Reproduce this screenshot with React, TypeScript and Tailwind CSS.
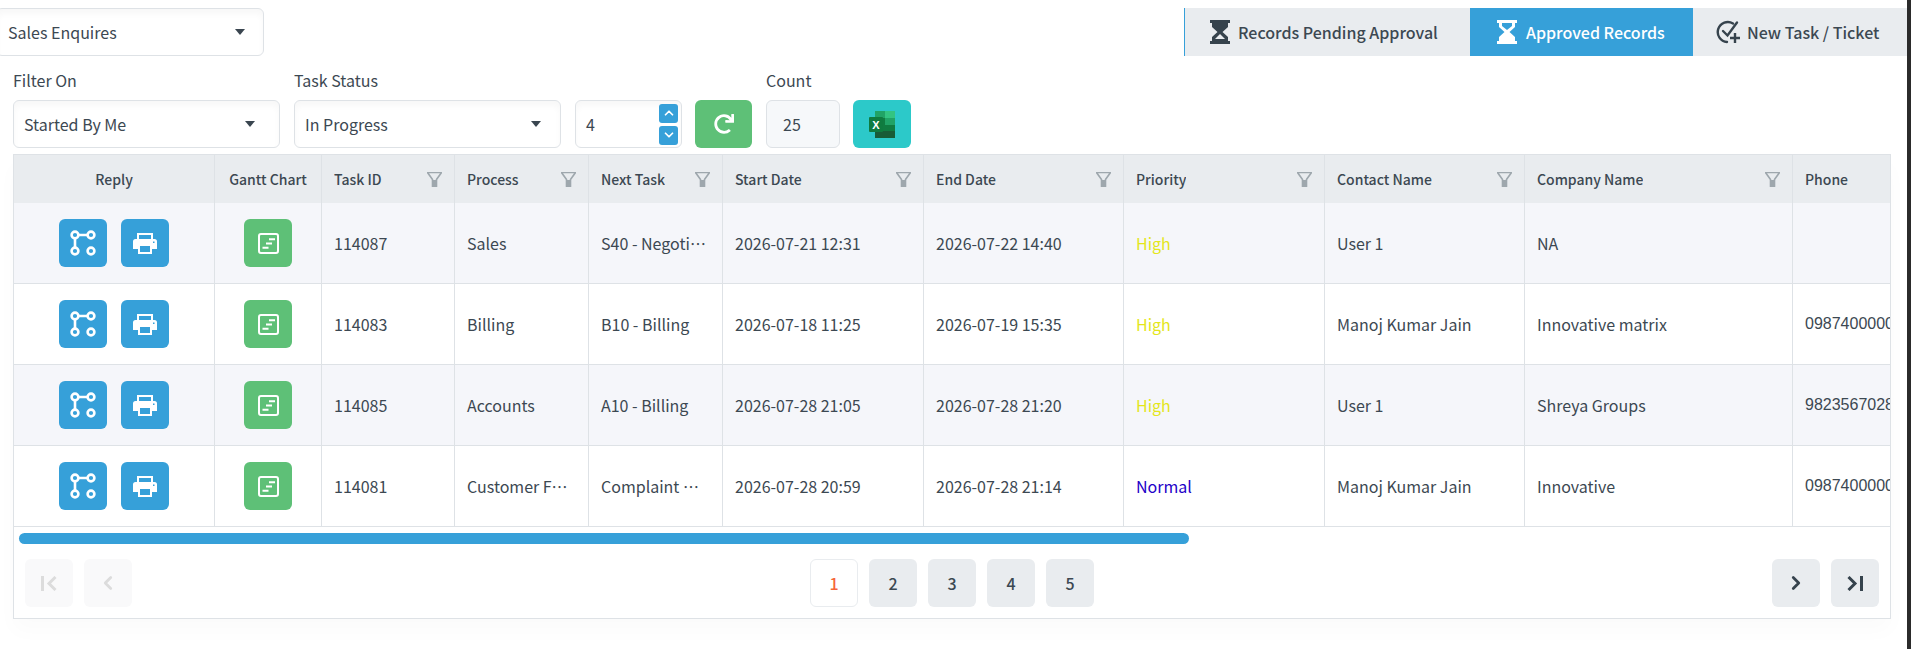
import React from "react";
import { FaRedo } from "react-icons/fa";
import { ChevronUp, ChevronDown, ChevronLeft, ChevronRight } from "lucide-react";

const Caret = () => (
  <svg width="10" height="6" viewBox="0 0 10 6"><path d="M0 0H10L5 6Z" fill="#3a4650" /></svg>
);

const Select = ({ text, className }: { text: string; className: string }) => (
  <div className={`flex h-[48px] items-center justify-between rounded-md border border-[#dee2e6] bg-white shadow-[inset_0_5px_6px_rgba(0,0,0,0.03)] ${className}`}>
    <span>{text}</span>
    <Caret />
  </div>
);

const HourStart = () => (
  <svg width="20" height="24" viewBox="0 0 20 24">
    <path d="M0 0H20V3H18V7L12.5 12L18 17V21H20V24H0V21H2V17L7.5 12L2 7V3H0Z" fill="#36434d" />
    <path d="M10 14L15 19H5Z" fill="#e9ecef" />
  </svg>
);
const HourEnd = () => (
  <svg width="20" height="24" viewBox="0 0 20 24">
    <path d="M0 0H20V3H18V7L12.5 12L18 17V21H20V24H0V21H2V17L7.5 12L2 7V3H0Z" fill="#fff" />
    <path d="M5 3H15V6L10 10L5 6Z" fill="#36a0d9" />
  </svg>
);
const NewTask = () => (
  <svg width="25" height="24" viewBox="0 0 25 24" fill="none" stroke="#36434d" strokeWidth="2.4">
    <path d="M17 3.5A10 10 0 1 0 11 22" strokeLinecap="round" />
    <path d="M7 11L11.5 15.5L21 2.5" strokeLinecap="round" />
    <path d="M19 13V23M14 18H24" />
  </svg>
);

const Funnel = () => (
  <svg width="15" height="15" viewBox="0 0 15 15" className="shrink-0">
    <path d="M0.5 0.5H14.5L9.5 7.5V14.5H5.5V7.5Z" fill="none" stroke="#9ea7ad" strokeWidth="1.6" strokeLinejoin="round" />
    <path d="M6 8H9V14.5H6Z" fill="#9ea7ad" />
  </svg>
);

const ReplyIcon = () => (
  <svg width="26" height="26" viewBox="0 0 26 26" fill="none" stroke="#fff" strokeWidth="2.6">
    <circle cx="5" cy="5" r="3.4" />
    <circle cx="21" cy="5" r="3.4" />
    <circle cx="5" cy="21" r="3.4" />
    <circle cx="21" cy="21" r="3.4" />
    <path d="M8.4 5H17.6M5 8.4V17.6" />
  </svg>
);
const PrintIcon = () => (
  <svg width="24" height="21" viewBox="0 0 24 21">
    <path d="M5 7V1H19V7" fill="none" stroke="#fff" strokeWidth="2" />
    <path d="M2.5 6H21.5A2.5 2.5 0 0 1 24 8.5V16H0V8.5A2.5 2.5 0 0 1 2.5 6Z" fill="#fff" />
    <rect x="6" y="12" width="12" height="8" fill="#36a0d9" stroke="#fff" strokeWidth="2" />
    <rect x="8" y="14.5" width="8" height="3" fill="#fff" opacity="0.0" />
    <rect x="20" y="8.5" width="1.5" height="1.5" fill="#36a0d9" />
  </svg>
);
const GanttIcon = () => (
  <svg width="21" height="21" viewBox="0 0 21 21" fill="none">
    <rect x="1" y="1" width="19" height="19" rx="2" stroke="#fff" strokeWidth="2" />
    <path d="M11 6.2H17M8 10.5H14M4.5 14.8H10.5" stroke="#fff" strokeWidth="2" />
  </svg>
);
const ExcelIcon = () => (
  <svg width="27" height="27" viewBox="0 0 27 27">
    <rect x="6" y="0" width="20" height="27" rx="1" fill="#107c41" />
    <rect x="16" y="0" width="10" height="7" fill="#33c481" />
    <rect x="6" y="0" width="10" height="7" fill="#21a366" />
    <rect x="16" y="7" width="10" height="7" fill="#21a366" />
    <rect x="6" y="20" width="20" height="7" fill="#185c37" />
    <rect x="16" y="14" width="10" height="6" fill="#107c41" />
    <rect x="0" y="6" width="14" height="15" rx="1" fill="#0f7b3f" />
    <text x="7" y="17.5" textAnchor="middle" fontSize="11" fontWeight="700" fill="#fff" fontFamily="Liberation Sans, sans-serif">X</text>
  </svg>
);

const widths = [201, 107, 133, 134, 134, 201, 200, 201, 200, 268, 150];
const heads: [string, boolean][] = [
  ["Reply", false], ["Gantt Chart", false], ["Task ID", true], ["Process", true], ["Next Task", true],
  ["Start Date", true], ["End Date", true], ["Priority", true], ["Contact Name", true], ["Company Name", true], ["Phone", false],
];
const rows = [
  ["114087", "Sales", "S40 - Negotiation", "2026-07-21 12:31", "2026-07-22 14:40", "High", "User 1", "NA", ""],
  ["114083", "Billing", "B10 - Billing", "2026-07-18 11:25", "2026-07-19 15:35", "High", "Manoj Kumar Jain", "Innovative matrix", "098740000012"],
  ["114085", "Accounts", "A10 - Billing", "2026-07-28 21:05", "2026-07-28 21:20", "High", "User 1", "Shreya Groups", "9823567028"],
  ["114081", "Customer Feedback", "Complaint Handling", "2026-07-28 20:59", "2026-07-28 21:14", "Normal", "Manoj Kumar Jain", "Innovative", "098740000012"],
];

const PageBtn = ({ children, className }: { children: React.ReactNode; className: string }) => (
  <div className={`flex h-[48px] w-[48px] items-center justify-center rounded-md ${className}`}>{children}</div>
);

const DoubleL = ({ color }: { color: string }) => (
  <svg width="16" height="15" viewBox="0 0 16 15" fill="none" stroke={color} strokeWidth="3"><path d="M1.5 0V15M14.5 1L8 7.5L14.5 14" /></svg>
);
const DoubleR = ({ color }: { color: string }) => (
  <svg width="16" height="15" viewBox="0 0 16 15" fill="none" stroke={color} strokeWidth="3"><path d="M14.5 0V15M1.5 1L8 7.5L1.5 14" /></svg>
);

export default function App() {
  return (
    <div className="flex h-[649px] w-[1911px] overflow-hidden bg-white font-['Noto_Sans_CJK_SC',sans-serif] text-[16px] leading-[24px] text-[#3c4852]">
      <div className="w-[1907px] shrink-0">
        <div className="flex items-start justify-between pt-2">
          <Select text="Sales Enquires" className="-ml-[4px] w-[268px] pl-[11px] pr-[18px]" />
          <div className="flex h-[48px] w-[723px] items-center border-l border-[#36a0d9] bg-[#e9ecef] font-medium">
            <div className="flex h-full w-[285px] items-center gap-[8px] pl-[25px]"><HourStart /><span>Records Pending Approval</span></div>
            <div className="flex h-full w-[223px] items-center gap-[9px] bg-[#36a0d9] pl-[27px] text-white"><HourEnd /><span>Approved Records</span></div>
            <div className="flex h-full flex-1 items-center gap-[6px] pl-[23px]"><NewTask /><span>New Task / Ticket</span></div>
          </div>
        </div>

        <div className="ml-[13px] mt-[10px] flex items-end">
          <div className="w-[267px]">
            <div className="mb-[6px] h-[28px] leading-[28px]">Filter On</div>
            <Select text="Started By Me" className="pl-[10px] pr-[24px]" />
          </div>
          <div className="ml-[14px] w-[267px]">
            <div className="mb-[6px] h-[28px] leading-[28px]">Task Status</div>
            <Select text="In Progress" className="pl-[10px] pr-[19px]" />
          </div>
          <div className="ml-[14px] flex h-[48px] w-[107px] items-center justify-between rounded-md border border-[#dee2e6] bg-white pl-[10px] pr-[3px] shadow-[inset_0_5px_6px_rgba(0,0,0,0.03)]">
            <span>4</span>
            <div className="flex flex-col gap-[3px]">
              <div className="flex h-[19px] w-[19px] items-center justify-center rounded-[3px] bg-[#36a0d9]"><ChevronUp size={14} strokeWidth={3} color="#fff" /></div>
              <div className="flex h-[19px] w-[19px] items-center justify-center rounded-[3px] bg-[#36a0d9]"><ChevronDown size={14} strokeWidth={3} color="#fff" /></div>
            </div>
          </div>
          <div className="ml-[13px] flex h-[48px] w-[57px] items-center justify-center rounded-md bg-[#5ec077]"><FaRedo size={20} color="#fff" /></div>
          <div className="ml-[14px] w-[74px]">
            <div className="mb-[6px] h-[28px] leading-[28px]">Count</div>
            <div className="flex h-[48px] items-center rounded-md border border-[#dee2e6] bg-[#f6f8fa] pl-[16px]">25</div>
          </div>
          <div className="ml-[13px] flex h-[48px] w-[58px] items-center justify-center rounded-md bg-[#2cc9c9]"><ExcelIcon /></div>
        </div>

        <div className="ml-[13px] mt-[6px] h-[465px] w-[1878px] overflow-hidden border border-[#dee2e6] bg-white shadow-[0_12px_20px_rgba(0,0,0,0.02)]">
          <table className="w-[1929px] table-fixed border-separate border-spacing-0">
            <colgroup>
              {widths.map((w, i) => <col key={i} style={{ width: w }} />)}
            </colgroup>
            <thead>
              <tr>
                {heads.map(([h, f], i) => (
                  <th key={h} className="h-[48px] border-r border-[#dee2e6] bg-[#e9ecef] px-[12px] text-[14px] font-medium text-[#3c4852]">
                    {f ? (
                      <div className="flex items-center justify-between gap-[20px]">
                        <span className="truncate text-left">{h}</span>
                        <Funnel />
                      </div>
                    ) : (
                      <div className={i < 2 ? "text-center" : "text-left"}>{h}</div>
                    )}
                  </th>
                ))}
              </tr>
            </thead>
            <tbody>
              {rows.map((r, ri) => (
                <tr key={ri} className={ri % 2 === 0 ? "bg-[#f5f6fa]" : "bg-white"}>
                  <td className="h-[81px] border-r border-b border-[#dee2e6]">
                    <div className="flex items-center justify-center gap-[14px]">
                      <div className="flex h-[48px] w-[48px] items-center justify-center rounded-md bg-[#36a0d9]"><ReplyIcon /></div>
                      <div className="flex h-[48px] w-[48px] items-center justify-center rounded-md bg-[#36a0d9]"><PrintIcon /></div>
                    </div>
                  </td>
                  <td className="border-r border-b border-[#dee2e6]">
                    <div className="mx-auto flex h-[48px] w-[48px] items-center justify-center rounded-md bg-[#5ec077]"><GanttIcon /></div>
                  </td>
                  {r.map((c, ci) => (
                    <td
                      key={ci}
                      className={`truncate border-r border-b border-[#dee2e6] px-[12px] ${
                        c === "High" ? "text-[#e4e61a]" : c === "Normal" ? "text-[#2200c8]" : ""
                      } ${ci === 8 ? "font-['Liberation_Sans',sans-serif]" : ""}`}
                    >
                      {c}
                    </td>
                  ))}
                </tr>
              ))}
            </tbody>
          </table>

          <div className="ml-[5px] mt-[6px] h-[11px] w-[1170px] rounded-full bg-[#36a0d9]" />

          <div className="mt-[15px] flex items-center justify-between px-[11px]">
            <div className="flex gap-[11px]">
              <PageBtn className="bg-[#f9f9fa]"><DoubleL color="#dcdcdc" /></PageBtn>
              <PageBtn className="bg-[#f9f9fa]"><ChevronLeft size={22} strokeWidth={3} color="#dcdcdc" /></PageBtn>
            </div>
            <div className="flex gap-[11px] text-[16px] font-medium">
              <PageBtn className="border border-[#e9ecef] bg-white text-[#f5663a]">1</PageBtn>
              <PageBtn className="bg-[#e9ecef]">2</PageBtn>
              <PageBtn className="bg-[#e9ecef]">3</PageBtn>
              <PageBtn className="bg-[#e9ecef]">4</PageBtn>
              <PageBtn className="bg-[#e9ecef]">5</PageBtn>
            </div>
            <div className="flex gap-[11px]">
              <PageBtn className="bg-[#e9ecef]"><ChevronRight size={22} strokeWidth={3} color="#36434d" /></PageBtn>
              <PageBtn className="bg-[#e9ecef]"><DoubleR color="#36434d" /></PageBtn>
            </div>
          </div>
        </div>
      </div>
      <div className="w-[4px] shrink-0 bg-[#2b2b2b]" />
    </div>
  );
}
